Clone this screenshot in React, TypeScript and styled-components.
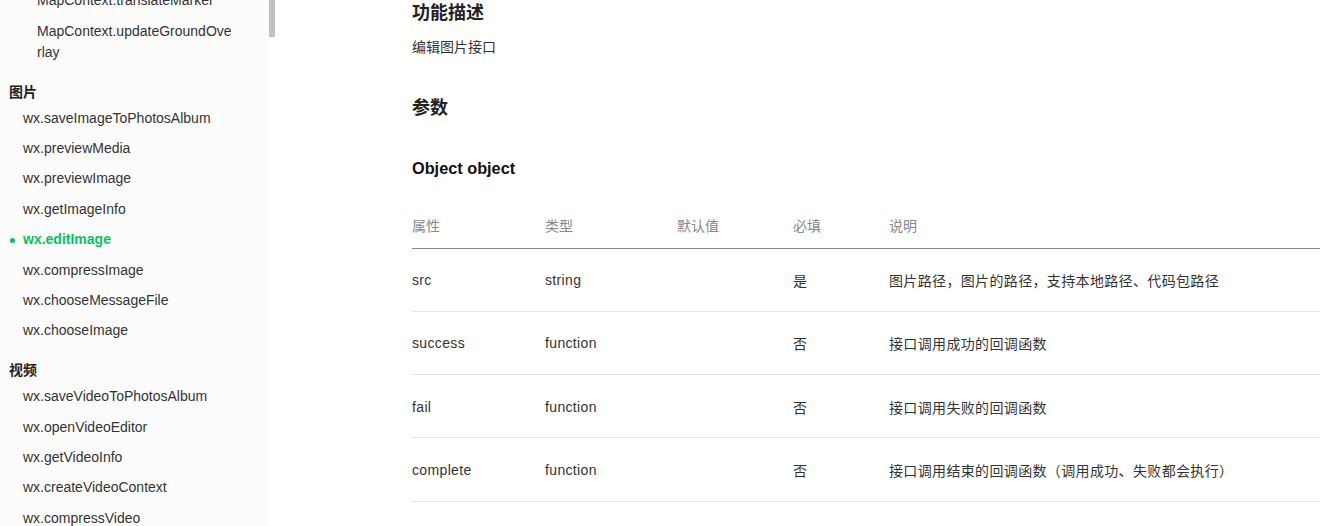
import React from "react";
import styled, { createGlobalStyle } from "styled-components";

const GlobalStyle = createGlobalStyle`
  html, body { margin: 0; padding: 0; background: #fff; }
  body {
    font-family: "Liberation Sans", "Noto Sans CJK SC", sans-serif;
    color: #333;
    -webkit-font-smoothing: antialiased;
  }
  * { box-sizing: border-box; }
`;

const Page = styled.div`
  display: flex;
  width: 1320px;
  height: 526px;
  overflow: hidden;
`;

const Sidebar = styled.aside`
  position: relative;
  flex: 0 0 275px;
  height: 526px;
  overflow: hidden;
  background: linear-gradient(to right, #fcfcfc 269px, #fff 269px);
`;

const ScrollThumb = styled.div`
  position: absolute;
  top: 0;
  left: 269px;
  width: 6px;
  height: 37px;
  background: #c1c1c1;
`;

const NavList = styled.nav`
  display: flex;
  flex-direction: column;
  width: 235px;
  margin-top: -14.3px;
`;

const Group = styled.div`
  display: flex;
  flex-direction: column;
`;

const GroupTitle = styled.div`
  padding: 14.5px 0 0 9px;
  font-size: 14px;
  line-height: 21px;
  font-weight: 700;
  color: #222;
`;

const NavItem = styled.div<{ $level?: number; $active?: boolean }>`
  position: relative;
  padding: 4.7px 0 4.7px ${(p) => (p.$level === 2 ? 37 : 23)}px;
  font-size: 14px;
  line-height: 21px;
  color: ${(p) => (p.$active ? "#07c160" : "#333")};
  font-weight: ${(p) => (p.$active ? 700 : 400)};
  word-break: break-all;
`;

const ActiveDot = styled.span`
  position: absolute;
  left: 10px;
  top: 50%;
  width: 5px;
  height: 5px;
  margin-top: -2px;
  border-radius: 50%;
  background: #07c160;
`;

const Main = styled.main`
  flex: 1;
  min-width: 0;
  padding-left: 137px;
  display: flex;
  flex-direction: column;
`;

const H2 = styled.h2<{ $gap?: number }>`
  margin: ${(p) => p.$gap ?? 0}px 0 0;
  font-size: 18px;
  line-height: 26px;
  font-weight: 700;
  color: #222;
`;

const H3 = styled.h3`
  margin: 35px 0 0;
  font-size: 16.3px;
  line-height: 24px;
  font-weight: 700;
  color: #111;
`;

const Para = styled.p`
  margin: 10px 0 0;
  font-size: 14px;
  line-height: 22px;
  color: #333;
`;

const Table = styled.table`
  margin-top: 23px;
  width: 100%;
  border-collapse: collapse;
  table-layout: fixed;
`;

const HeadCell = styled.th`
  text-align: left;
  font-weight: 400;
  font-size: 14px;
  color: #888;
  height: 45px;
  padding: 0;
  border-bottom: 1px solid #888;
`;

const Row = styled.tr`
  border-bottom: 1px solid #e5e5e5;
`;

const Cell = styled.td`
  padding: 1px 0 0;
  height: 63.3px;
  font-size: 14px;
  letter-spacing: 0.35px;
  color: #333;
  vertical-align: middle;
`;

const items1 = [
  "wx.saveImageToPhotosAlbum",
  "wx.previewMedia",
  "wx.previewImage",
  "wx.getImageInfo",
  "wx.editImage",
  "wx.compressImage",
  "wx.chooseMessageFile",
  "wx.chooseImage",
];
const items2 = [
  "wx.saveVideoToPhotosAlbum",
  "wx.openVideoEditor",
  "wx.getVideoInfo",
  "wx.createVideoContext",
  "wx.compressVideo",
];

const rows = [
  ["src", "string", "", "是", "图片路径，图片的路径，支持本地路径、代码包路径"],
  ["success", "function", "", "否", "接口调用成功的回调函数"],
  ["fail", "function", "", "否", "接口调用失败的回调函数"],
  ["complete", "function", "", "否", "接口调用结束的回调函数（调用成功、失败都会执行）"],
];

export default function App() {
  return (
    <>
      <GlobalStyle />
      <Page>
        <Sidebar>
          <NavList>
            <Group>
              <NavItem $level={2}>MapContext.translateMarker</NavItem>
              <NavItem $level={2}>MapContext.updateGroundOverlay</NavItem>
            </Group>
            <Group>
              <GroupTitle>图片</GroupTitle>
              {items1.map((t) => (
                <NavItem key={t} $active={t === "wx.editImage"}>
                  {t === "wx.editImage" && <ActiveDot />}
                  {t}
                </NavItem>
              ))}
            </Group>
            <Group>
              <GroupTitle>视频</GroupTitle>
              {items2.map((t) => (
                <NavItem key={t}>{t}</NavItem>
              ))}
            </Group>
          </NavList>
          <ScrollThumb />
        </Sidebar>
        <Main>
          <H2>功能描述</H2>
          <Para>编辑图片接口</Para>
          <H2 $gap={37}>参数</H2>
          <H3>Object object</H3>
          <Table>
            <colgroup>
              <col style={{ width: 133 }} />
              <col style={{ width: 132 }} />
              <col style={{ width: 116 }} />
              <col style={{ width: 96 }} />
              <col />
            </colgroup>
            <thead>
              <tr>
                <HeadCell>属性</HeadCell>
                <HeadCell>类型</HeadCell>
                <HeadCell>默认值</HeadCell>
                <HeadCell>必填</HeadCell>
                <HeadCell>说明</HeadCell>
              </tr>
            </thead>
            <tbody>
              {rows.map((r) => (
                <Row key={r[0]}>
                  {r.map((c, i) => (
                    <Cell key={i}>{c}</Cell>
                  ))}
                </Row>
              ))}
            </tbody>
          </Table>
        </Main>
      </Page>
    </>
  );
}
